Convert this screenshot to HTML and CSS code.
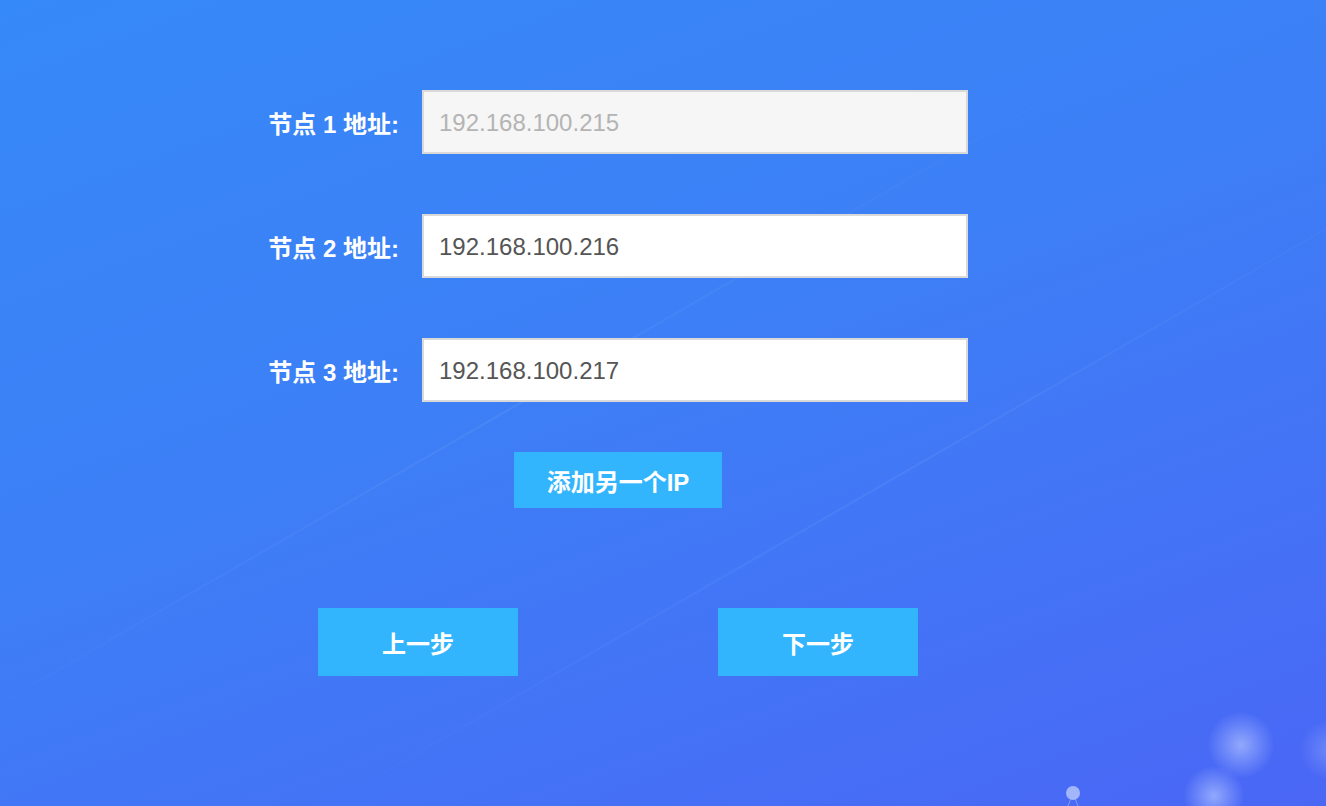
FILE: index.html
```html
<!DOCTYPE html>
<html lang="zh">
<head>
<meta charset="utf-8">
<link rel="stylesheet" href="styles.css">
</head>
<body>
<div class="page">
  <div class="streak s1"></div>
  <div class="streak s2"></div>
  <div class="form">
    <div class="row">
      <label class="label">节点 1 地址:</label>
      <div class="input disabled">192.168.100.215</div>
    </div>
    <div class="row">
      <label class="label">节点 2 地址:</label>
      <div class="input">192.168.100.216</div>
    </div>
    <div class="row">
      <label class="label">节点 3 地址:</label>
      <div class="input">192.168.100.217</div>
    </div>
    <div class="add-wrap">
      <button class="btn add">添加另一个IP</button>
    </div>
    <div class="nav">
      <button class="btn step">上一步</button>
      <button class="btn step">下一步</button>
    </div>
  </div>
  <div class="glow g1"></div>
  <div class="glow g2"></div>
  <div class="glow g3"></div>
  <svg class="node" width="30" height="20" viewBox="0 0 30 20">
    <line x1="15" y1="7" x2="10" y2="20" stroke="#a9bcfb" stroke-width="1" opacity="0.6"/>
    <line x1="15" y1="7" x2="20" y2="20" stroke="#a9bcfb" stroke-width="1" opacity="0.6"/>
    <circle cx="15" cy="7" r="7" fill="#a3b6fb"/>
  </svg>
</div>
</body>
</html>
```
FILE: styles.css
```css
* { box-sizing: border-box; }
html, body { margin: 0; padding: 0; }
body {
  font-family: "Liberation Sans", "Noto Sans CJK SC", sans-serif;
}
.page {
  position: relative;
  width: 1326px;
  height: 806px;
  overflow: hidden;
  background: linear-gradient(160deg, #3689f8 0%, #3d7ff6 45%, #4570f6 80%, #4a66f5 100%);
}
.streak {
  position: absolute;
  height: 2px;
  width: 1400px;
  background: linear-gradient(90deg, rgba(255,255,255,0) 0%, rgba(255,255,255,0.06) 50%, rgba(255,255,255,0) 100%);
  transform-origin: 0 0;
}
.s1 { left: -100px; top: 760px; transform: rotate(-30deg); }
.s2 { left: 300px; top: 820px; transform: rotate(-30deg); }
.form {
  position: relative;
  display: flex;
  flex-direction: column;
  padding-top: 90px;
  padding-left: 250px;
}
.row {
  display: flex;
  align-items: center;
  height: 64px;
  margin-bottom: 60px;
}
.row:nth-child(3) { margin-bottom: 50px; }
.label {
  width: 149px;
  text-align: right;
  color: #fff;
  font-weight: bold;
  font-size: 24px;
  margin-right: 23px;
  padding-top: 1px;
}
.input {
  width: 546px;
  height: 64px;
  border: 2px solid #d9d9d9;
  background: #fff;
  color: #555;
  font-size: 24px;
  padding-left: 15px;
  padding-top: 2px;
  display: flex;
  align-items: center;
}
.input.disabled {
  background: #f6f6f6;
  color: #b4b4b4;
}
.btn {
  border: none;
  background: #33b5fd;
  color: #fff;
  font-weight: bold;
  font-size: 24px;
  font-family: "Liberation Sans", "Noto Sans CJK SC", sans-serif;
  padding: 0;
}
.add-wrap {
  display: flex;
  padding-left: 264px;
  margin-bottom: 100px;
}
.add {
  width: 208px;
  height: 56px;
}
.nav {
  display: flex;
  gap: 200px;
  padding-left: 68px;
}
.step {
  width: 200px;
  height: 68px;
}
.glow {
  position: absolute;
  border-radius: 50%;
  background: radial-gradient(circle, rgba(170,190,255,0.75) 0%, rgba(150,170,255,0.35) 45%, rgba(120,150,255,0) 72%);
}
.g1 { left: 1208px; top: 712px; width: 66px; height: 66px; }
.g2 { left: 1184px; top: 766px; width: 60px; height: 60px; }
.g3 { left: 1300px; top: 720px; width: 60px; height: 60px; opacity: 0.5; }
.node {
  position: absolute;
  left: 1058px;
  top: 786px;
}
```
